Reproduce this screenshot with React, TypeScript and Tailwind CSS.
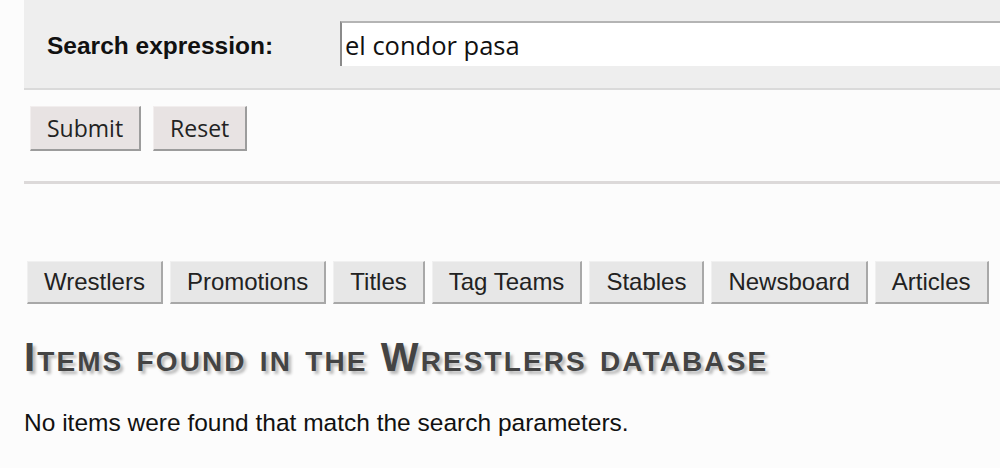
import React from 'react'

const tabs = ['Wrestlers', 'Promotions', 'Titles', 'Tag Teams', 'Stables', 'Newsboard', 'Articles']

function SearchPanel() {
  return (
    <div className="flex items-center h-[90px] bg-[#eeeeee] border-b-2 border-[#dadada]">
      <label className="w-[316px] pl-[23px] pt-[5px] text-[24.5px] font-bold text-[#111] font-['Liberation_Sans',Arial,sans-serif]">
        Search expression:
      </label>
      <input
        type="text"
        defaultValue="el condor pasa"
        className="flex-1 h-[45px] -mt-[1px] bg-white pl-[3px] text-[25.5px] text-[#111] font-['Open_Sans','Noto_Sans',sans-serif] border-t-2 border-l-2 border-t-[#b4b4b4] border-l-[#8a8a8a] outline-none"
      />
    </div>
  )
}

function FormButton({ children }: { children: React.ReactNode }) {
  return (
    <button
      type="button"
      className="h-[45px] px-[16px] bg-[#e8e3e3] text-[23px] text-[#222] font-['Open_Sans','Noto_Sans',sans-serif] border-t border-l border-b-2 border-r-2 border-t-[#f2eeee] border-l-[#f2eeee] border-b-[#9c9c9c] border-r-[#9c9c9c]"
    >
      {children}
    </button>
  )
}

function Tabs() {
  return (
    <div className="flex gap-[7px] pl-[3px]">
      {tabs.map((t) => (
        <button
          key={t}
          type="button"
          className="h-[43px] px-[16px] bg-[#e7e7e7] text-[24px] text-[#222] font-['Liberation_Sans',Arial,sans-serif] border-t border-l border-b-2 border-r-2 border-t-[#f0f0f0] border-l-[#f0f0f0] border-b-[#a8a8a8] border-r-[#a8a8a8]"
        >
          {t}
        </button>
      ))}
    </div>
  )
}

export default function App() {
  return (
    <div className="w-[1000px] h-[468px] overflow-hidden bg-[#fcfcfc]">
      <div className="w-[1060px] pl-[24px]">
        <SearchPanel />
        <div className="flex gap-[12px] pl-[6px] pt-[16px]">
          <FormButton>Submit</FormButton>
          <FormButton>Reset</FormButton>
        </div>
        <hr className="mt-[30px] h-[3px] bg-[#dcd9d9] border-0" />
        <div className="pt-[77px]">
          <Tabs />
        </div>
        <h2 className="mt-[29px] text-[40px] leading-[48px] font-bold tracking-[2.1px] text-[#444] [font-variant:small-caps] [text-shadow:3px_3px_3px_#b8b8b8] font-['Liberation_Sans',Arial,sans-serif]">
          Items found in the Wrestlers database
        </h2>
        <p className="mt-[24px] text-[24.5px] text-[#111] font-['Liberation_Sans',Arial,sans-serif]">
          No items were found that match the search parameters.
        </p>
      </div>
    </div>
  )
}
